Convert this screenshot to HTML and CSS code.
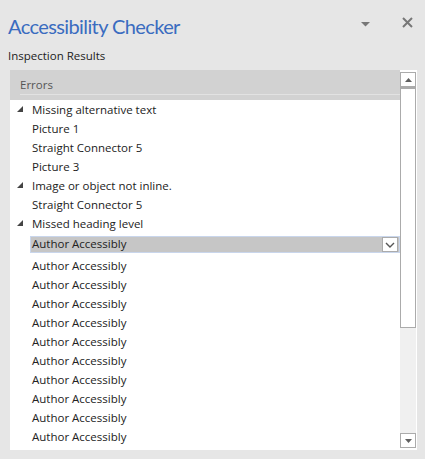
FILE: index.html
```html
<!DOCTYPE html><html>
<head>
<title>Accessibility Checker</title>
<link rel="stylesheet" href="styles.css">
</head>
<body>
<div class="pane">
	<div class="head">
		<h1 class="title">Accessibility Checker</h1>
		<svg class="menu" width="9" height="5" viewBox="0 0 9 5"><polygon points="0,0 9,0 4.5,4.5" fill="#777"/></svg>
		<svg class="close" width="11" height="11" viewBox="0 0 11 11"><path d="M1,1 L10,10 M10,1 L1,10" stroke="#777" stroke-width="2"/></svg>
	</div>
	<div class="label">Inspection Results</div>
	<div class="results">
		<div class="tree">
			<div class="group">Errors</div>
			<div class="row parent"><svg class="twist" width="6" height="6" viewBox="0 0 6 6"><polygon points="6,0 6,6 0,6" fill="#444"/></svg>Missing alternative text</div>
			<div class="row">Picture 1</div>
			<div class="row">Straight Connector 5</div>
			<div class="row">Picture 3</div>
			<div class="row parent"><svg class="twist" width="6" height="6" viewBox="0 0 6 6"><polygon points="6,0 6,6 0,6" fill="#444"/></svg>Image or object not inline.</div>
			<div class="row">Straight Connector 5</div>
			<div class="row parent"><svg class="twist" width="6" height="6" viewBox="0 0 6 6"><polygon points="6,0 6,6 0,6" fill="#444"/></svg>Missed heading level</div>
			<div class="row sel">
				<div class="hl">
					<span>Author Accessibly</span>
					<span class="drop"><svg width="10" height="6" viewBox="0 0 10 6"><path d="M1,1 L5,5 L9,1" fill="none" stroke="#555" stroke-width="1.4"/></svg></span>
				</div>
			</div>
			<div class="row">Author Accessibly</div>
			<div class="row">Author Accessibly</div>
			<div class="row">Author Accessibly</div>
			<div class="row">Author Accessibly</div>
			<div class="row">Author Accessibly</div>
			<div class="row">Author Accessibly</div>
			<div class="row">Author Accessibly</div>
			<div class="row">Author Accessibly</div>
			<div class="row">Author Accessibly</div>
			<div class="row">Author Accessibly</div>
		</div>
		<div class="scroll">
			<div class="btn"><svg width="7" height="4" viewBox="0 0 7 4"><polygon points="0,4 7,4 3.5,0" fill="#606060"/></svg></div>
			<div class="thumb"></div>
			<div class="track"></div>
			<div class="btn"><svg width="7" height="4" viewBox="0 0 7 4"><polygon points="0,0 7,0 3.5,4" fill="#606060"/></svg></div>
		</div>
	</div>
</div>
</body></html>
```
FILE: styles.css
```css
body{
	margin: 0;
	background: #e6e6e6;
	font-family: "Open Sans", "Noto Sans", sans-serif;
	color: #222;
}

.pane{
	height: 459px;
	padding: 0 8px 0 10px;
	box-sizing: border-box;
	display: flex;
	flex-direction: column;
}

.head{
	display: flex;
	align-items: center;
	height: 46px;
	margin-left: -2px;
}
.title{
	margin: 0;
	font-family: Lato, "Open Sans", sans-serif;
	font-size: 20px;
	font-weight: 400;
	letter-spacing: -0.6px;
	color: #3a6cc0;
	flex: 1;
	padding-top: 6px;
}
.menu{margin: 2px 32px 0 0;}
.close{margin: -1px 4px 0 0;}

.label{
	font-size: 11.5px;
	height: 24px;
	line-height: 20px;
	margin-left: -2px;
}

.results{
	background: #fff;
	height: 380px;
	display: flex;
}

.tree{flex: 1; overflow: hidden;}

.group{
	height: 30px;
	background: #d2d2d2;
	color: #555;
	font-size: 11.5px;
	line-height: 29px;
	padding-left: 10px;
	position: relative;
}
.group::after{
	content: "";
	position: absolute;
	left: 10px; right: 0; bottom: 5px;
	border-top: 1px solid #e2e2e2;
}

.row{
	height: 19px;
	line-height: 19px;
	font-size: 11.5px;
	padding-left: 22px;
	white-space: nowrap;
	position: relative;
}
.twist{position: absolute; left: 7px; top: 6px;}

.row.sel{
	height: 23px;
	padding: 3px 0 0 20px;
	box-sizing: border-box;
}
.hl{
	height: 17px;
	box-sizing: border-box;
	background: #c6c6c6;
	border: 1px solid #c9d6ec;
	line-height: 12px;
	padding: 0 2px 2px 1px;
	display: flex;
	justify-content: space-between;
	align-items: center;
}
.drop{
	width: 16px;
	height: 15px;
	box-sizing: border-box;
	background: #fff;
	border: 1px solid #ababab;
	display: flex;
	align-items: center;
	justify-content: center;
	margin: 2px -1px 0 0;
}

.scroll{
	width: 17px;
	padding: 2px 1px 2px 0;
	box-sizing: border-box;
	display: flex;
	flex-direction: column;
}
.btn{
	height: 15px;
	border: 1px solid #ababab;
	box-sizing: border-box;
	display: flex;
	align-items: center;
	justify-content: center;
}
.thumb{
	height: 241px;
	border: 1px solid #ababab;
	border-top-width: 2px;
	box-sizing: border-box;
}
.track{flex: 1; background: #f0f0f0;}
```
